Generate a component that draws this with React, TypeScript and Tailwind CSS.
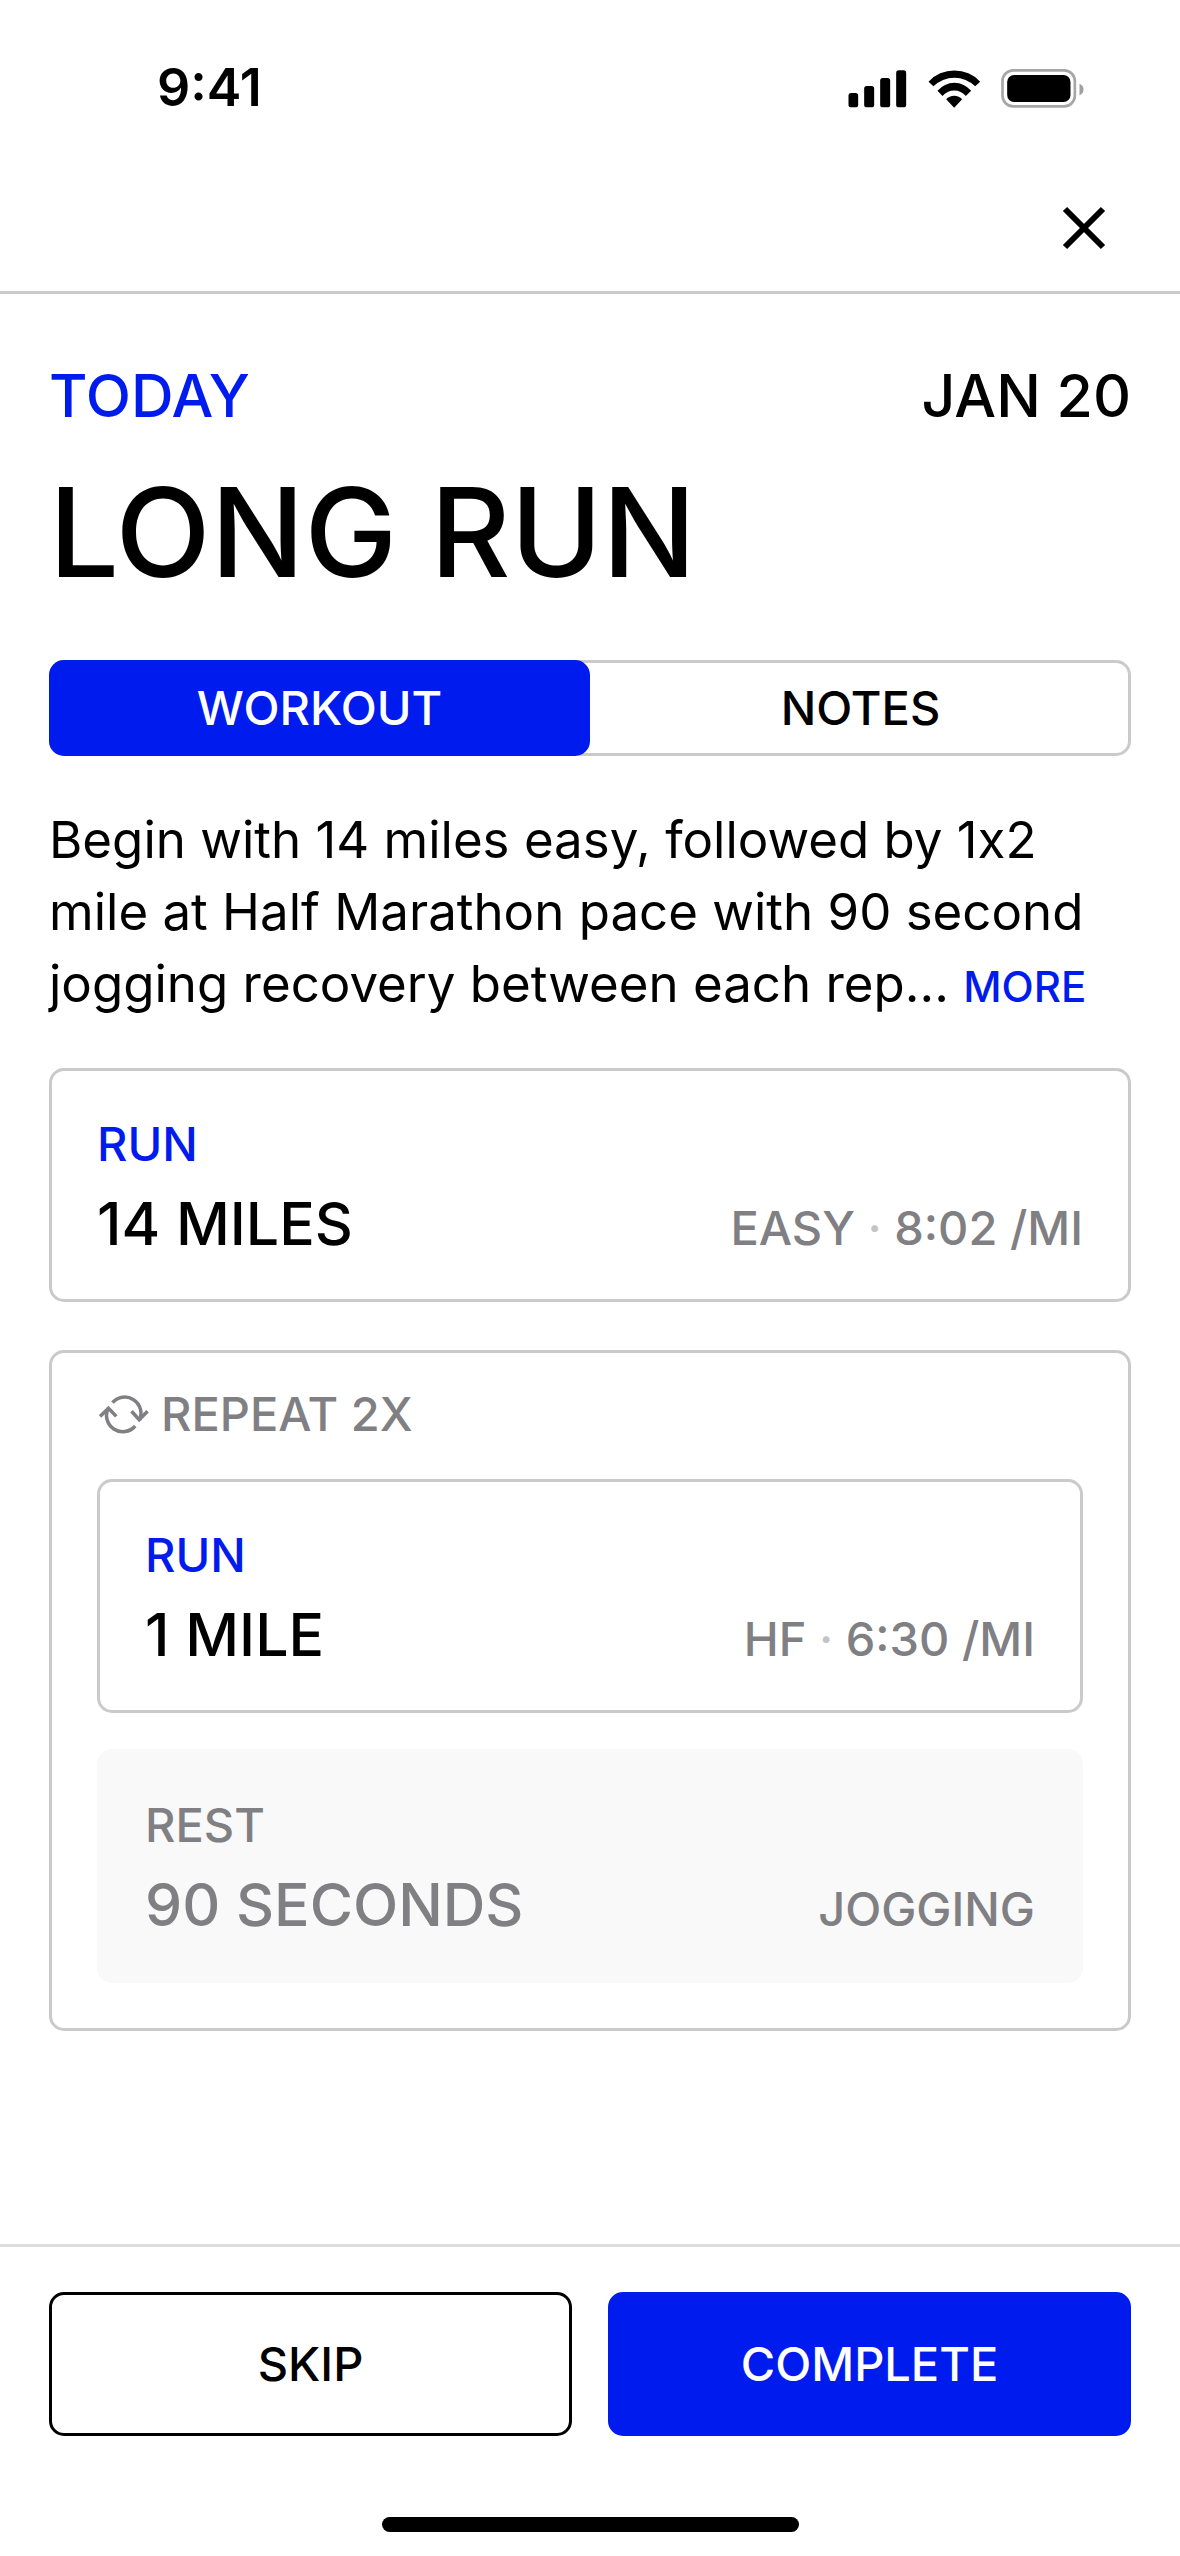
import { useState } from "react";

function StatusIcons() {
  return (
    <svg width="236" height="39" viewBox="144 87 707 117" aria-hidden="true">
      <rect x="145" y="159" width="29" height="43" rx="8" />
      <rect x="192" y="138" width="30" height="64" rx="8" />
      <rect x="240" y="114" width="30" height="88" rx="8" />
      <rect x="288" y="91" width="30" height="111" rx="8" />
      <path d="M385 125A106 106 0 0 1 540 125L525 139A89 89 0 0 0 400 139Z" />
      <path d="M412 152A66 66 0 0 1 513 152L497 168A45 45 0 0 0 427 168Z" />
      <path d="M438 178A32 32 0 0 1 486 178L462 203Z" />
      <rect x="607" y="91" width="217" height="108" rx="32" fill="none" stroke="#a6a6a6" strokeWidth="8" />
      <rect x="621" y="105" width="190" height="81" rx="21" />
      <path d="M838 131Q850 136 850 148Q850 161 838 166Z" fill="#a0a0a0" />
    </svg>
  );
}

function CloseIcon() {
  return (
    <svg width="44" height="44" viewBox="0 0 44 44" aria-hidden="true">
      <path d="M3 3L41 41M41 3L3 41" fill="none" stroke="#000" strokeWidth="6" />
    </svg>
  );
}

function RepeatIcon() {
  return (
    <svg width="50" height="40" viewBox="0 0 50 40" fill="none" stroke="#807f83" strokeWidth="3.5" aria-hidden="true">
      <path d="M13.5 8.6A16.3 16.3 0 0 1 40.6 26" />
      <path d="M32.5 17.2L40.2 25.6L48.6 17.2" />
      <path d="M9.3 14A16.3 16.3 0 0 0 36.2 32" />
      <path d="M1 22.4L9.5 14.2L17.3 22.4" />
    </svg>
  );
}

type StepProps = {
  kind: string;
  title: string;
  details: string[];
  rest?: boolean;
};

function Step({ kind, title, details, rest = false }: StepProps) {
  return (
    <article
      className={
        rest
          ? "rounded-[15px] border-3 border-[#f9f9f9] bg-[#f9f9f9] px-[45px] pt-[45px] pb-[39px] text-[#807f83]"
          : "rounded-[15px] border-3 border-[#cacaca] px-[45px] pt-[45px] pb-[39px]"
      }
    >
      <p className={rest ? "text-[47px] leading-[56px]" : "text-[47px] leading-[56px] text-[#001bed]"}>{kind}</p>
      <div className="mt-4 flex items-baseline justify-between">
        <h2 className="text-[59px] leading-[72px]">{title}</h2>
        <p className="text-[47px] leading-[56px] text-[#807f83]">
          {details.map((detail, i) => (
            <span key={detail}>
              {i > 0 && <span className="text-[#c4c4c6]"> · </span>}
              {detail}
            </span>
          ))}
        </p>
      </div>
    </article>
  );
}

export default function App() {
  const [tab, setTab] = useState("WORKOUT");
  return (
    <div className="flex min-h-screen flex-col bg-white font-['Inter',sans-serif] font-medium text-black">
      <header className="border-b-3 border-[#cacaca] pt-12 pb-[23px]">
        <div className="flex h-20 items-center justify-between pr-24 pl-[157px]">
          <span className="text-[52px] leading-[60px] font-semibold">9:41</span>
          <StatusIcons />
        </div>
        <div className="mt-[60px] flex justify-end pr-14">
          <button type="button" aria-label="Close" className="flex size-20 items-center justify-center">
            <CloseIcon />
          </button>
        </div>
      </header>

      <main className="px-[49px] pt-[66px] pb-12">
        <div className="flex justify-between text-[59px] leading-[72px]">
          <span className="text-[#001bed]">TODAY</span>
          <span>JAN 20</span>
        </div>
        <h1 className="mt-7 text-[124px] leading-[144px]">LONG RUN</h1>

        <div role="tablist" className="mt-14 grid h-24 grid-cols-2 rounded-[15px] inset-ring-3 inset-ring-[#cacaca]">
          {["WORKOUT", "NOTES"].map((name) => (
            <button
              key={name}
              type="button"
              role="tab"
              aria-selected={tab === name}
              onClick={() => setTab(name)}
              className={
                tab === name
                  ? "rounded-[15px] bg-[#001bed] text-[47px] leading-[56px] text-white"
                  : "rounded-[15px] text-[47px] leading-[56px]"
              }
            >
              {name}
            </button>
          ))}
        </div>

        <p className="mt-12 text-[51px] leading-[72px] font-normal [font-feature-settings:'calt'_0]">
          <span>
            Begin with 14 miles easy, followed by 1x2 mile at Half Marathon pace with 90 second jogging recovery between
            each rep...
          </span>{" "}
          <button type="button" className="text-[42px] leading-[56px] font-medium text-[#001bed]">
            MORE
          </button>
        </p>

        <div className="mt-12 flex flex-col gap-12">
          <Step kind="RUN" title="14 MILES" details={["EASY", "8:02 /MI"]} />
          <section className="rounded-[15px] border-3 border-[#cacaca] px-[45px] pt-[33px] pb-[45px]">
            <p className="flex items-center gap-3 pl-0.5 text-[47px] leading-[56px] text-[#807f83]">
              <RepeatIcon />
              REPEAT 2X
            </p>
            <div className="mt-[37px] flex flex-col gap-9">
              <Step kind="RUN" title="1 MILE" details={["HF", "6:30 /MI"]} />
              <Step kind="REST" title="90 SECONDS" details={["JOGGING"]} rest />
            </div>
          </section>
        </div>
      </main>

      <footer className="mt-auto border-t-3 border-[#dddddd] px-[49px] pt-[45px] pb-6">
        <div className="grid grid-cols-2 gap-9 text-[47px] leading-[56px]">
          <button type="button" className="h-36 rounded-[15px] border-3 border-black">
            SKIP
          </button>
          <button type="button" className="h-36 rounded-[15px] bg-[#001bed] text-white">
            COMPLETE
          </button>
        </div>
        <div className="mx-auto mt-[81px] h-[15px] w-[417px] rounded-full bg-black" />
      </footer>
    </div>
  );
}
